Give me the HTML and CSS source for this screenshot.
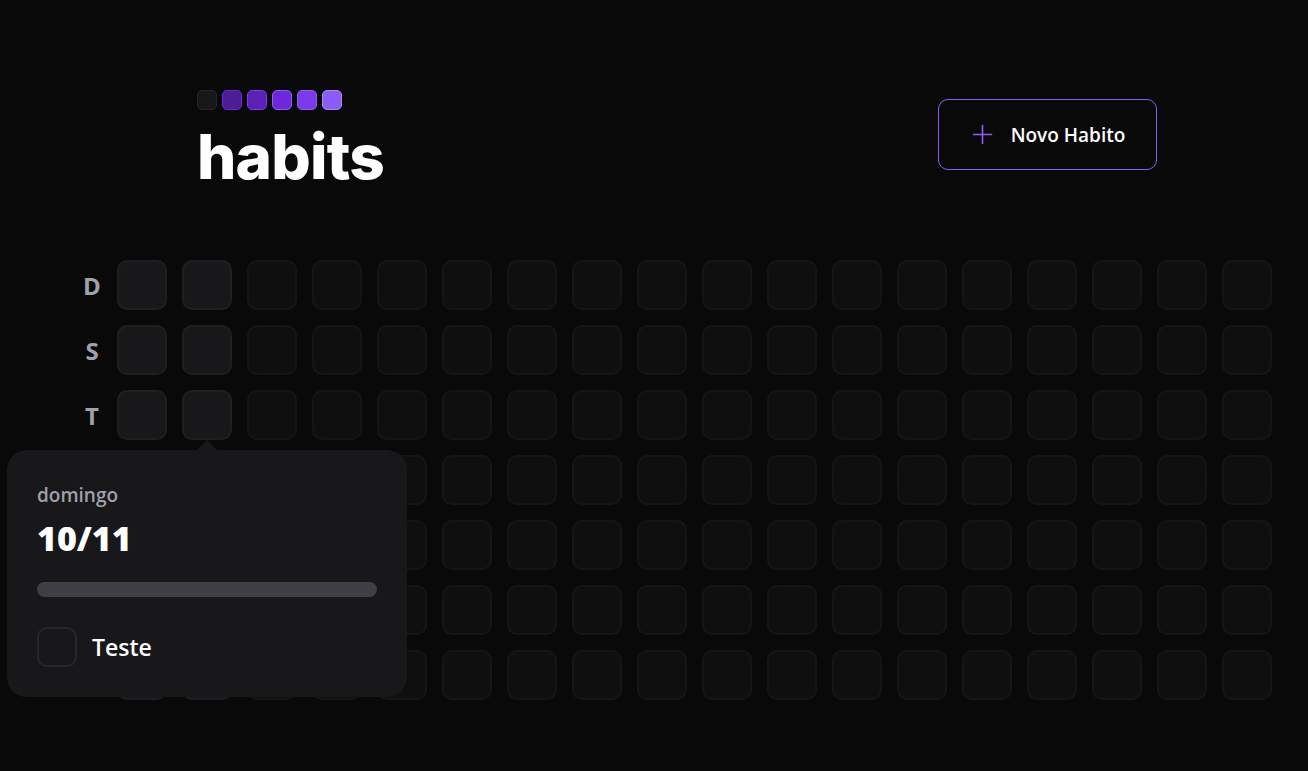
FILE: index.html
```html
<!DOCTYPE html>
<html lang="pt-BR">
<head>
<meta charset="utf-8">
<title>habits</title>
<link rel="stylesheet" href="styles.css">
</head>
<body>
<main class="app">
  <header class="header">
    <div class="logo">
      <div class="logo-squares">
        <span class="sq sq-0"></span>
        <span class="sq sq-1"></span>
        <span class="sq sq-2"></span>
        <span class="sq sq-3"></span>
        <span class="sq sq-4"></span>
        <span class="sq sq-5"></span>
      </div>
      <div class="logo-text">habits</div>
    </div>
    <button class="new-btn" type="button">
      <svg class="plus" width="25" height="25" viewBox="0 0 25 25" fill="none" stroke="currentColor" stroke-width="1.6" stroke-linecap="round">
        <line x1="3.5" y1="12.5" x2="21.5" y2="12.5"/>
        <line x1="12.5" y1="3.5" x2="12.5" y2="21.5"/>
      </svg>
      <span class="btn-label">Novo Habito</span>
    </button>
  </header>

  <section class="summary">
    <div class="weekdays">
      <div class="wd">D</div>
      <div class="wd">S</div>
      <div class="wd">T</div>
      <div class="wd">Q</div>
      <div class="wd">Q</div>
      <div class="wd">S</div>
      <div class="wd">S</div>
    </div>
    <div class="days">
      <div class="day"></div><div class="day"></div><div class="day"></div><div class="day"></div><div class="day"></div><div class="day"></div><div class="day"></div>
      <div class="day"></div><div class="day"></div><div class="day"></div><div class="day"></div><div class="day"></div><div class="day"></div><div class="day"></div>
      <div class="day off"></div><div class="day off"></div><div class="day off"></div><div class="day off"></div><div class="day off"></div><div class="day off"></div><div class="day off"></div>
      <div class="day off"></div><div class="day off"></div><div class="day off"></div><div class="day off"></div><div class="day off"></div><div class="day off"></div><div class="day off"></div>
      <div class="day off"></div><div class="day off"></div><div class="day off"></div><div class="day off"></div><div class="day off"></div><div class="day off"></div><div class="day off"></div>
      <div class="day off"></div><div class="day off"></div><div class="day off"></div><div class="day off"></div><div class="day off"></div><div class="day off"></div><div class="day off"></div>
      <div class="day off"></div><div class="day off"></div><div class="day off"></div><div class="day off"></div><div class="day off"></div><div class="day off"></div><div class="day off"></div>
      <div class="day off"></div><div class="day off"></div><div class="day off"></div><div class="day off"></div><div class="day off"></div><div class="day off"></div><div class="day off"></div>
      <div class="day off"></div><div class="day off"></div><div class="day off"></div><div class="day off"></div><div class="day off"></div><div class="day off"></div><div class="day off"></div>
      <div class="day off"></div><div class="day off"></div><div class="day off"></div><div class="day off"></div><div class="day off"></div><div class="day off"></div><div class="day off"></div>
      <div class="day off"></div><div class="day off"></div><div class="day off"></div><div class="day off"></div><div class="day off"></div><div class="day off"></div><div class="day off"></div>
      <div class="day off"></div><div class="day off"></div><div class="day off"></div><div class="day off"></div><div class="day off"></div><div class="day off"></div><div class="day off"></div>
      <div class="day off"></div><div class="day off"></div><div class="day off"></div><div class="day off"></div><div class="day off"></div><div class="day off"></div><div class="day off"></div>
      <div class="day off"></div><div class="day off"></div><div class="day off"></div><div class="day off"></div><div class="day off"></div><div class="day off"></div><div class="day off"></div>
      <div class="day off"></div><div class="day off"></div><div class="day off"></div><div class="day off"></div><div class="day off"></div><div class="day off"></div><div class="day off"></div>
      <div class="day off"></div><div class="day off"></div><div class="day off"></div><div class="day off"></div><div class="day off"></div><div class="day off"></div><div class="day off"></div>
      <div class="day off"></div><div class="day off"></div><div class="day off"></div><div class="day off"></div><div class="day off"></div><div class="day off"></div><div class="day off"></div>
      <div class="day off"></div><div class="day off"></div><div class="day off"></div><div class="day off"></div><div class="day off"></div><div class="day off"></div><div class="day off"></div>
    </div>

    <div class="popover">
      <span class="arrow"></span>
      <div class="pop-weekday">domingo</div>
      <div class="pop-date">10/11</div>
      <div class="progress"><div class="progress-fill" style="width:0%"></div></div>
      <div class="habits-list">
        <label class="habit">
          <span class="checkbox"></span>
          <span class="habit-title">Teste</span>
        </label>
      </div>
    </div>
  </section>
</main>
</body>
</html>
```

FILE: styles.css
```css
* { box-sizing: border-box; }

html, body {
  margin: 0;
  padding: 0;
  background: #09090a;
  color: #ffffff;
  font-family: "Open Sans", "Noto Sans", "Liberation Sans", sans-serif;
}

.app {
  width: 1308px;
  height: 771px;
  overflow: hidden;
  padding-top: 90px;
}

.header {
  width: 960px;
  margin-left: 197px;
  display: flex;
  justify-content: space-between;
  align-items: flex-start;
}

.logo {
  display: flex;
  flex-direction: column;
}

.logo-squares {
  display: flex;
  gap: 5px;
}

.sq {
  width: 20px;
  height: 20px;
  border-radius: 5px;
  border: 1.5px solid;
}
.sq-0 { background: #18181b; border-color: #27272a; }
.sq-1 { background: #4c1d95; border-color: #6d28d9; }
.sq-2 { background: #5b21b6; border-color: #7c3aed; }
.sq-3 { background: #6d28d9; border-color: #8b5cf6; }
.sq-4 { background: #7c3aed; border-color: #8b5cf6; }
.sq-5 { background: #8b5cf6; border-color: #a78bfa; }

.logo-text {
  font-family: "Inter", "Open Sans", sans-serif;
  font-weight: 800;
  font-size: 62px;
  line-height: 62px;
  letter-spacing: -0.8px;
  margin-top: 16px;
  color: #ffffff;
}

.new-btn {
  margin-top: 9px;
  width: 219px;
  height: 71px;
  background: transparent;
  border: 1.25px solid #8b5cf6;
  border-radius: 10px;
  color: #ffffff;
  font-family: inherit;
  font-weight: 600;
  font-size: 19px;
  display: flex;
  align-items: center;
  justify-content: center;
  gap: 16px;
  padding: 0;
  white-space: nowrap;
}

.btn-label { white-space: nowrap; }

.plus { color: #8b5cf6; flex: none; }

.summary {
  position: relative;
  margin-top: 72px;
  margin-left: 67px;
  display: flex;
}

.weekdays {
  display: grid;
  grid-template-rows: repeat(7, 50px);
  row-gap: 15px;
  width: 50px;
}

.wd {
  display: flex;
  align-items: center;
  justify-content: center;
  color: #a1a1aa;
  font-weight: 700;
  font-size: 24px;
}

.days {
  display: grid;
  grid-template-rows: repeat(7, 50px);
  grid-auto-flow: column;
  grid-auto-columns: 50px;
  gap: 15px;
}

.day {
  width: 50px;
  height: 50px;
  border-radius: 10px;
  background: #18181b;
  border: 2px solid #1f1f22;
}

.day.off {
  opacity: 0.4;
  border-color: #27272a;
}

.popover {
  position: absolute;
  left: -60px;
  top: 190px;
  width: 400px;
  padding: 30px;
  background: #18181b;
  border-radius: 20px;
  display: flex;
  flex-direction: column;
}

.arrow {
  position: absolute;
  top: -10px;
  left: 190px;
  width: 0;
  height: 0;
  border-left: 10px solid transparent;
  border-right: 10px solid transparent;
  border-bottom: 10px solid #18181b;
}

.pop-weekday {
  color: #a1a1aa;
  font-weight: 600;
  font-size: 19px;
  line-height: 30px;
}

.pop-date {
  margin-top: 5px;
  font-weight: 800;
  font-size: 34px;
  line-height: 47px;
  color: #ffffff;
}

.progress {
  margin-top: 20px;
  height: 15px;
  border-radius: 999px;
  background: #3f3f46;
  overflow: hidden;
}

.progress-fill {
  height: 100%;
  background: #7c3aed;
}

.habits-list {
  margin-top: 30px;
  display: flex;
  flex-direction: column;
}

.habit {
  display: flex;
  align-items: center;
  gap: 15px;
}

.checkbox {
  width: 40px;
  height: 40px;
  border-radius: 10px;
  background: #18181b;
  border: 2px solid #27272a;
  flex: none;
}

.habit-title {
  font-weight: 600;
  font-size: 23px;
  line-height: 30px;
  color: #ffffff;
}
```
